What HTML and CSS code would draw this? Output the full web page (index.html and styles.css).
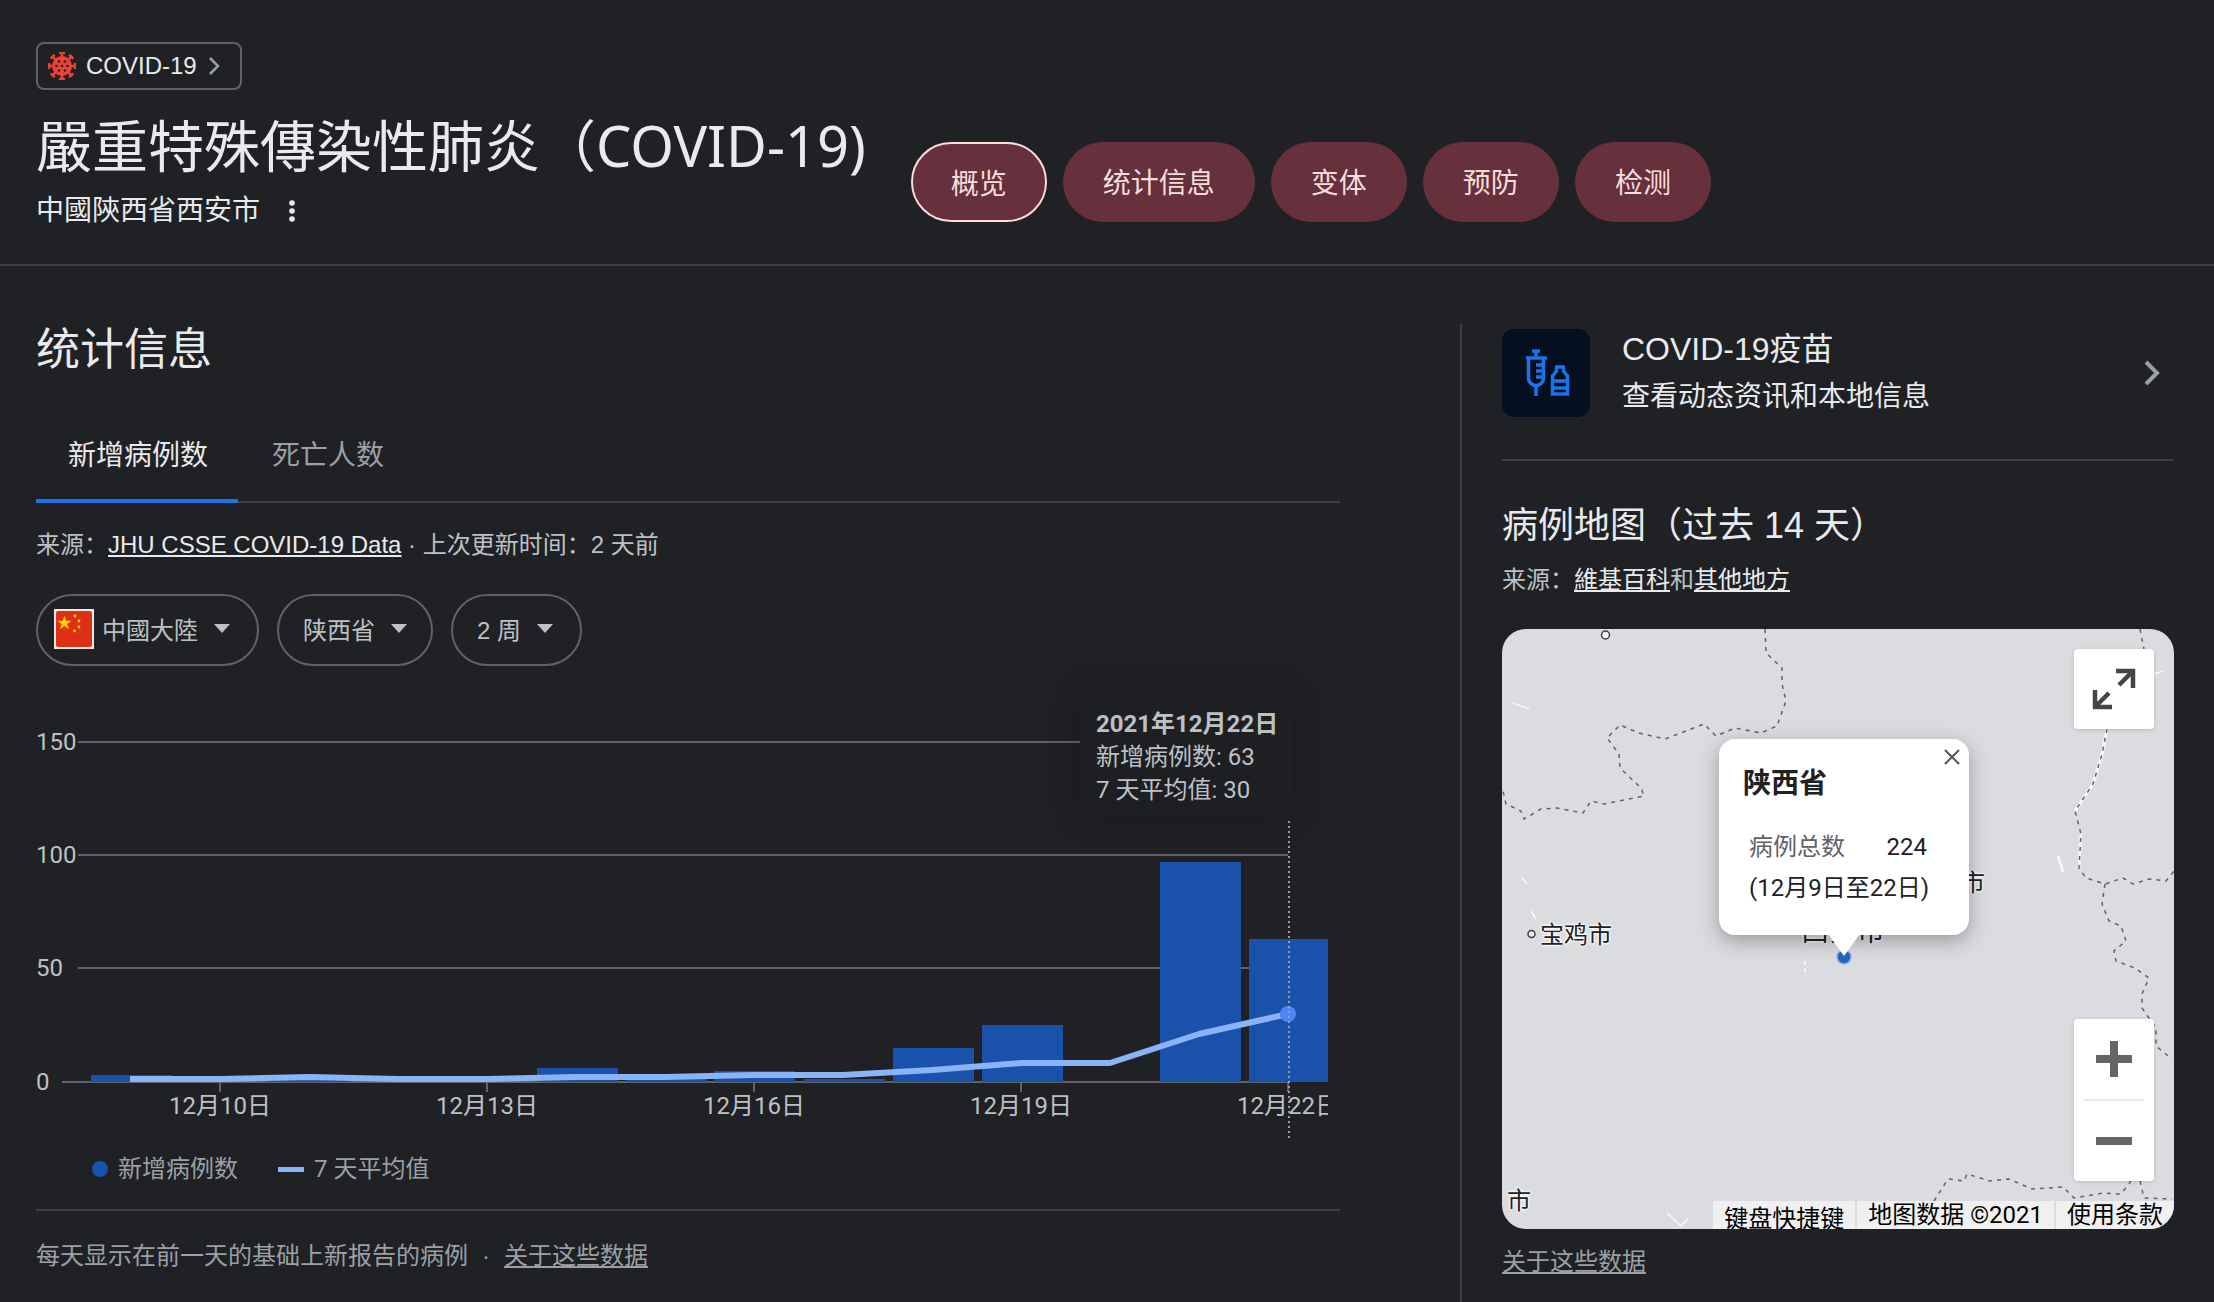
FILE: index.html
```html
<!DOCTYPE html>
<html lang="zh">
<head>
  <meta charset="UTF-8">
  <title>COVID-19 统计信息</title>
  <link rel="stylesheet" href="styles.css">
</head>
<body>
  <header class="top">
    <div class="top-left">
      <a class="chip">
        <svg class="chip-virus" width="28" height="28" viewBox="0 0 28 28">
          <g stroke="#ea4335" stroke-width="2.500" stroke-linecap="round">
            <path d="M14 1v26M1 14h26M4.800 4.800l18.400 18.400M23.200 4.800L4.800 23.200"/>
            <path d="M12 1h4M12 27h4M1 12v4M27 12v4M3.500 6l2.500-2.500M22 3.500L24.500 6M3.500 22L6 24.500M22 24.500l2.500-2.500"/>
          </g>
          <circle cx="14" cy="14" r="10" fill="#ea4335"/>
          <g fill="#202124">
            <circle cx="11" cy="9.500" r="1.300"/><circle cx="17" cy="9.500" r="1.300"/>
            <circle cx="8.500" cy="14" r="1.300"/><circle cx="14" cy="14" r="1.300"/><circle cx="19.500" cy="14" r="1.300"/>
            <circle cx="11" cy="18.500" r="1.300"/><circle cx="17" cy="18.500" r="1.300"/>
          </g>
        </svg>
        <span>COVID-19</span>
        <svg width="14" height="20" viewBox="0 0 14 20"><path d="M2 2l8 8-8 8" fill="none" stroke="#9aa0a6" stroke-width="2.500"/></svg>
      </a>
      <h1>嚴重特殊傳染性肺炎（COVID-19)</h1>
      <div class="place">
        <span>中國陝西省西安市</span>
        <svg width="8" height="24" viewBox="0 0 8 24" fill="#e8eaed"><circle cx="4" cy="4" r="2.800"/><circle cx="4" cy="12" r="2.800"/><circle cx="4" cy="20" r="2.800"/></svg>
      </div>
    </div>
    <nav class="pills">
      <a class="pill active">概览</a>
      <a class="pill">统计信息</a>
      <a class="pill">变体</a>
      <a class="pill">预防</a>
      <a class="pill">检测</a>
    </nav>
  </header>

  <main class="page">
    <section class="stats">
      <h2>统计信息</h2>
      <div class="tabs">
        <a class="tab active">新增病例数</a>
        <a class="tab">死亡人数</a>
      </div>
      <p class="source">来源：<a>JHU CSSE COVID-19 Data</a> · 上次更新时间：2 天前</p>
      <div class="filters">
        <button class="filter flag-filter">
          <svg class="flag" width="40" height="40" viewBox="0 0 40 40">
            <rect width="40" height="40" fill="#f1e9e6"/>
            <rect x="2" y="2" width="36" height="36" rx="2" fill="#de2f17"/>
            <path d="M11 6l1.800 5.400h5.700l-4.600 3.400 1.800 5.400-4.700-3.300-4.700 3.300 1.800-5.400-4.600-3.400h5.700z" fill="#ffd500" transform="translate(0 1) scale(.95)"/>
            <g fill="#ffd500"><circle cx="21" cy="7" r="1.400"/><circle cx="25" cy="12" r="1.400"/><circle cx="25" cy="18" r="1.400"/><circle cx="20.500" cy="22" r="1.400"/></g>
          </svg>
          中國大陸<i class="caret"></i>
        </button>
        <button class="filter">陕西省<i class="caret"></i></button>
        <button class="filter weeks">2 周<i class="caret"></i></button>
      </div>

      <div class="chart">
        <svg width="1304" height="460" viewBox="36 690 1304 460">
          <defs><clipPath id="plot"><rect x="36" y="690" width="1292" height="460"/></clipPath></defs>
          <g class="grid">
            <path d="M78 742H1288M78 855H1288M78 968H1288"/>
            <path class="base" d="M62 1082H1288"/>
            <path d="M220 1082v10M487 1082v10M754 1082v10M1021 1082v10M1288 1082v10"/>
          </g>
          <g class="ylabels">
            <text x="36" y="750">150</text>
            <text x="36" y="863">100</text>
            <text x="36" y="976">50</text>
            <text x="36" y="1090">0</text>
          </g>
          <g class="bars">
            <rect x="91" y="1075" width="81" height="7"/>
            <rect x="269" y="1080" width="81" height="2"/>
            <rect x="537" y="1068" width="81" height="14"/>
            <rect x="626" y="1078" width="81" height="4"/>
            <rect x="714" y="1071" width="81" height="11"/>
            <rect x="804" y="1079" width="81" height="3"/>
            <rect x="893" y="1048" width="81" height="34"/>
            <rect x="982" y="1025" width="81" height="57"/>
            <rect x="1160" y="862" width="81" height="220"/>
            <rect x="1249" y="939" width="79" height="143"/>
          </g>
          <polyline class="avg" points="130,1079 220,1079 309,1077 398,1079 487,1079 576,1077 665,1077 754,1075 843,1075 932,1070 1021,1063 1110,1063 1199,1034 1288,1014"/>
          <circle cx="1288" cy="1014" r="8" fill="#4d86f5"/>
          <g class="xlabels" clip-path="url(#plot)">
            <text x="220" y="1114">12月10日</text>
            <text x="487" y="1114">12月13日</text>
            <text x="754" y="1114">12月16日</text>
            <text x="1021" y="1114">12月19日</text>
            <text x="1288" y="1114">12月22日</text>
          </g>
          <path class="cursor" d="M1289 816V1138"/>
        </svg>
        <div class="tip">
          <b>2021年12月22日</b>
          <span>新增病例数: 63</span>
          <span>7 天平均值: 30</span>
        </div>
      </div>

      <div class="legend">
        <span class="key"><i class="dot"></i>新增病例数</span>
        <span class="key"><i class="dash"></i>7 天平均值</span>
      </div>
      <p class="note">每天显示在前一天的基础上新报告的病例<span class="sep">·</span><a>关于这些数据</a></p>
    </section>

    <aside class="side">
      <a class="vaccine">
        <span class="vaccine-icon">
          <svg width="88" height="88" viewBox="0 0 88 88" fill="none" stroke="#1a73e8" stroke-width="3.500">
            <path d="M30 22h8M34 22v7M24 29h21M26.500 29v20a7.500 7.500 0 0 0 15 0V29M34 57v10M34 36h7M34 42h7M34 48h7"/>
            <path d="M53 38h10M54.500 38v4l-4 5v18h15V47l-4-5v-4M50.500 52h15M50.500 59h15"/>
          </svg>
        </span>
        <span class="vaccine-text">
          <strong>COVID-19疫苗</strong>
          <span>查看动态资讯和本地信息</span>
        </span>
        <svg class="vaccine-go" width="16" height="26" viewBox="0 0 16 26"><path d="M2 2l11 11L2 24" fill="none" stroke="#9aa0a6" stroke-width="4"/></svg>
      </a>
      <h3>病例地图（过去 14 天）</h3>
      <p class="map-source">来源：<a>維基百科</a>和<a>其他地方</a></p>

      <div class="map">
        <svg class="map-lines" width="672" height="600" viewBox="0 0 672 600" fill="none">
          <g stroke="#f8f9fa" stroke-width="1.500">
            <path d="M11 74l16 6M20 249l5 6M29 282l5 8M652 45l9-3M165 584l14 13 7-7"/>
            <path d="M556 227l5 16" stroke-width="2.500"/>
            <path d="M605 100l-5 25-9 30-18 27" stroke-width="3"/>
            <path d="M579 205l-2 34" stroke-width="2.500"/>
            <path d="M303 332v15" stroke-dasharray="4 3"/>
          </g>
          <g stroke="#5f6368" stroke-width="1.500" stroke-dasharray="4 5">
            <path d="M263 0l1 24 16 15 0 16 4 17-9 25-16 7-26-5-19 8-12-12-39 15-26-6-19-8-13 13 12 16 1 14 21 20 3 8-40 8-13-3-8 12-26-5-16 1-17 10-3-8-15-7-3-13"/>
            <path d="M638 0l4 20M605 100l-5 25-9 30-18 27 6 23-2 34 7 10 19 6 18-6 10 6 16-5 17 2 8-10"/>
            <path d="M603 255l-3 20 7 17 12 5 5 15-12 10 2 10 19 7 14 10-7 16 0 14 14 20 0 18 16 13"/>
            <path d="M432 572l14-22 16 2 3-7 23 7 19-2 23 10 31-2 11 11 29-5 18 1 10-13M638 552l4 17 28 1"/>
          </g>
          <circle cx="103.500" cy="6" r="4" fill="#f1f3f4" stroke="#3c4043" stroke-width="1.500"/>
          <circle cx="29.500" cy="305" r="3.500" fill="#f1f3f4" stroke="#3c4043" stroke-width="1.500"/>
          <circle cx="342" cy="328" r="7" fill="#2a63b8" stroke="#8ab4f8" stroke-width="1.500"/>
        </svg>

        <span class="city baoji">宝鸡市</span>
        <span class="city weinan">渭南市</span>
        <span class="city xian">西安市</span>
        <span class="city corner">市</span>

        <button class="map-btn expand" aria-label="全屏">
          <svg width="44" height="44" viewBox="0 0 44 44" fill="none" stroke="#444" stroke-width="4.500">
            <path d="M24 4h17v17M41 4L27 18M20 40H3V23M3 40l14-14"/>
          </svg>
        </button>
        <div class="zoom-box">
          <button class="zoom-btn" aria-label="放大"><svg width="36" height="36" viewBox="0 0 36 36" fill="#666"><path d="M14 0h8v14h14v8H22v14h-8V22H0v-8h14z"/></svg></button>
          <hr>
          <button class="zoom-btn" aria-label="缩小"><svg width="36" height="8" viewBox="0 0 36 8" fill="#666"><rect width="36" height="8"/></svg></button>
        </div>

        <div class="popup">
          <svg class="popup-x" width="18" height="18" viewBox="0 0 18 18"><path d="M2 2l14 14M16 2L2 16" stroke="#555" stroke-width="2"/></svg>
          <h4>陕西省</h4>
          <div class="popup-row"><span class="muted">病例总数</span><span>224</span></div>
          <div class="popup-row">(12月9日至22日)</div>
        </div>

        <div class="attr">
          <span>键盘快捷键</span>
          <span>地图数据 ©2021</span>
          <span>使用条款</span>
        </div>
      </div>
      <a class="map-about">关于这些数据</a>
    </aside>
  </main>
</body>
</html>
```

FILE: styles.css
```css
* {
  box-sizing: border-box;
  margin: 0;
}

html, body {
  height: 1302px;
  overflow: hidden;
}

body {
  background: #202124;
  color: #e8eaed;
  font-family: "Liberation Sans", "Noto Sans CJK SC", sans-serif;
  font-size: 24px;
}

a {
  color: inherit;
}

/* header */
.top {
  display: flex;
  align-items: flex-start;
  gap: 45px;
  height: 266px;
  padding: 42px 36px 0;
  border-bottom: 2px solid #3c4043;
}

.chip {
  display: inline-flex;
  align-items: center;
  width: 206px;
  height: 48px;
  padding-left: 10px;
  border: 2px solid #5f6368;
  border-radius: 8px;
}

.chip-virus {
  margin-right: 10px;
}

.chip span {
  margin-right: 11px;
}

h1 {
  margin-top: 19px;
  font: 400 56px/72px "Noto Sans", "Noto Sans CJK TC", sans-serif;
  white-space: nowrap;
}

.place {
  display: flex;
  align-items: center;
  gap: 28px;
  margin-top: 12px;
  font-family: Roboto, "Noto Sans CJK TC", sans-serif;
  font-size: 28px;
  line-height: 36px;
}

.pills {
  display: flex;
  gap: 16px;
  margin-top: 100px;
}

.pill {
  display: flex;
  align-items: center;
  height: 80px;
  padding: 0 40px 2px;
  border-radius: 40px;
  background: #66303c;
  color: #f9dedc;
  font-size: 28px;
}

.pill.active {
  padding: 0 38px;
  border: 2px solid #f9dedc;
}

/* page columns */
.page {
  display: flex;
  padding-top: 58px;
}

.stats {
  width: 1340px;
  margin-right: 120px;
  padding-left: 36px;
}

h2 {
  font-size: 44px;
  font-weight: 400;
  line-height: 52px;
}

.tabs {
  display: flex;
  height: 89px;
  margin-top: 38px;
  border-bottom: 2px solid #3c4043;
}

.tab {
  height: 89px;
  padding: 22px 30px 0 32px;
  color: #9aa0a6;
  font-size: 28px;
  line-height: 40px;
}

.tab + .tab {
  padding-left: 34px;
}

.tab.active {
  border-bottom: 4px solid #1a73e8;
  color: #e8eaed;
}

.source {
  margin-top: 24px;
  color: #bdc1c6;
  line-height: 36px;
}

.source a, .map-source a {
  color: #e8eaed;
  text-decoration: underline;
}

.filters {
  display: flex;
  gap: 18px;
  margin-top: 31px;
}

.filter {
  display: flex;
  align-items: center;
  height: 72px;
  padding: 0 24px 3px;
  border: 2px solid #5f6368;
  border-radius: 36px;
  background: none;
  color: #bdc1c6;
  font: inherit;
}

.flag-filter {
  padding: 0 27px 3px 16px;
}

.weeks {
  padding-right: 27px;
}

.flag {
  margin-right: 8px;
}

.caret {
  width: 0;
  height: 0;
  margin-left: 16px;
  border-top: 9px solid #bdc1c6;
  border-left: 8px solid transparent;
  border-right: 8px solid transparent;
}

/* chart */
.chart {
  position: relative;
  width: 1304px;
  height: 460px;
  margin-top: 24px;
  font-family: Roboto, "Noto Sans CJK SC", sans-serif;
}

.chart svg {
  display: block;
}

.grid path {
  fill: none;
  stroke: #5f6368;
  stroke-width: 2;
}

.ylabels text, .xlabels text {
  fill: #bdc1c6;
  font-size: 24px;
}

.xlabels text {
  text-anchor: middle;
}

.bars rect {
  fill: #1a51aa;
}

.avg {
  fill: none;
  stroke: #8ab4f8;
  stroke-width: 6;
  stroke-linejoin: round;
}

.cursor {
  stroke: #9aa0a6;
  stroke-width: 2;
  stroke-dasharray: 2 3;
}

.tip {
  position: absolute;
  left: 1044px;
  top: 3px;
  display: flex;
  flex-direction: column;
  width: 211px;
  height: 125px;
  padding: 15px 16px 0;
  background: #1e1f22;
  box-shadow: 0 0 30px rgba(0, 0, 0, 0.25);
  color: #bdc1c6;
  line-height: 33px;
  white-space: nowrap;
}

.legend {
  display: flex;
  gap: 40px;
  margin-top: 3px;
  padding-left: 56px;
  color: #9aa0a6;
  font-family: Roboto, "Noto Sans CJK SC", sans-serif;
  line-height: 32px;
}

.key {
  display: flex;
  align-items: center;
}

.dot {
  width: 16px;
  height: 16px;
  margin-right: 10px;
  border-radius: 50%;
  background: #1a51aa;
}

.dash {
  width: 26px;
  height: 5px;
  margin-right: 10px;
  background: #8ab4f8;
}

.note {
  margin-top: 24px;
  padding-top: 27px;
  border-top: 2px solid #3c4043;
  color: #9aa0a6;
  line-height: 36px;
}

.note a {
  text-decoration: underline;
}

.sep {
  margin: 0 14px;
}

/* right column */
.side {
  width: 714px;
  height: 980px;
  padding: 5px 0 0 40px;
  border-left: 2px solid #3c4043;
}

.vaccine {
  display: flex;
  align-items: center;
  height: 132px;
  padding-bottom: 43px;
  border-bottom: 2px solid #3c4043;
}

.vaccine-icon {
  width: 88px;
  height: 88px;
  margin-right: 32px;
  border-radius: 12px;
  background: #04101f;
}

.vaccine-text {
  display: flex;
  flex: 1;
  flex-direction: column;
  gap: 8px;
  font-size: 28px;
  line-height: 40px;
}

.vaccine-text strong {
  font-size: 32px;
  font-weight: 400;
}

.vaccine-go {
  margin-right: 14px;
}

h3 {
  margin-top: 41px;
  font-size: 36px;
  font-weight: 400;
  line-height: 48px;
}

.map-source {
  margin-top: 12px;
  color: #bdc1c6;
  line-height: 36px;
}

/* map */
.map {
  position: relative;
  width: 672px;
  height: 600px;
  margin-top: 31px;
  overflow: hidden;
  border-radius: 24px;
  background: #dadce0;
  font-family: Roboto, "Noto Sans CJK SC", sans-serif;
}

.map-lines {
  position: absolute;
  left: 0;
  top: 0;
}

.city {
  position: absolute;
  color: #202124;
  line-height: 28px;
  text-shadow: 0 0 3px #fff, 0 0 3px #fff, 0 0 3px #fff;
  white-space: nowrap;
}

.baoji { left: 38px; top: 292px; }
.weinan { left: 411px; top: 240px; }
.xian { left: 299px; top: 289px; font-size: 28px; }
.corner { left: 5px; top: 558px; }

.map-btn, .zoom-box {
  position: absolute;
  left: 572px;
  width: 80px;
  border: 0;
  border-radius: 4px;
  background: #fff;
  box-shadow: 0 1px 4px rgba(60, 64, 67, 0.2);
}

.expand {
  top: 20px;
  display: flex;
  align-items: center;
  justify-content: center;
  height: 80px;
  padding: 0;
}

.zoom-box {
  top: 390px;
  display: flex;
  flex-direction: column;
  align-items: center;
  height: 162px;
}

.zoom-btn {
  display: flex;
  align-items: center;
  justify-content: center;
  width: 80px;
  height: 80px;
  padding: 0;
  border: 0;
  background: none;
}

.zoom-box hr {
  width: 60px;
  height: 2px;
  border: 0;
  background: #e8eaed;
}

.popup {
  position: absolute;
  left: 217px;
  top: 110px;
  width: 250px;
  height: 196px;
  padding: 27px 24px 0;
  border-radius: 16px;
  background: #fff;
  box-shadow: 0 6px 20px rgba(0, 0, 0, 0.3);
  color: #202124;
}

.popup::after {
  content: "";
  position: absolute;
  left: 109px;
  bottom: -21px;
  border-top: 22px solid #fff;
  border-left: 16px solid transparent;
  border-right: 16px solid transparent;
}

.popup-x {
  position: absolute;
  right: 8px;
  top: 9px;
}

.popup h4 {
  font-size: 28px;
  font-weight: 700;
  line-height: 36px;
}

.popup-row {
  display: flex;
  justify-content: space-between;
  width: 178px;
  margin-left: 6px;
  line-height: 41px;
  white-space: nowrap;
}

.popup h4 + .popup-row {
  margin-top: 25px;
}

.muted {
  color: #5f6368;
}

.attr {
  position: absolute;
  right: 0;
  bottom: 0;
  display: flex;
  gap: 2px;
  height: 28px;
  color: #000;
  font-size: 24px;
  line-height: 28px;
  white-space: nowrap;
}

.attr span {
  padding: 0 11px;
  background: rgba(245, 245, 245, 0.8);
}

.attr span:first-child {
  padding-top: 4px;
}

.map-about {
  display: block;
  margin-top: 17px;
  color: #9aa0a6;
  line-height: 32px;
  text-decoration: underline;
}
```
